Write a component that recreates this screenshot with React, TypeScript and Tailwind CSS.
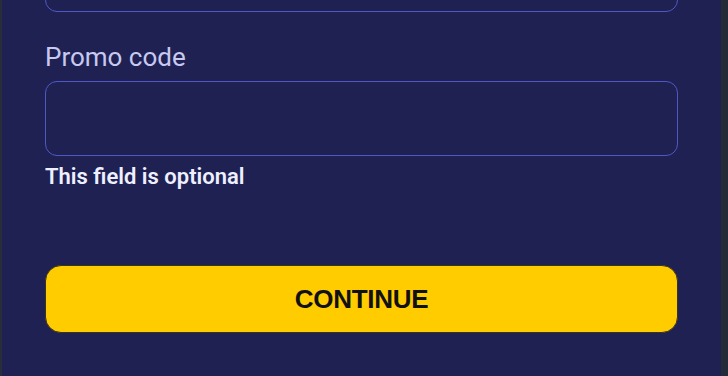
import React from 'react';

const App: React.FC = () => {
    return (
        <div className="w-[728px] h-[376px] overflow-hidden flex bg-[#232a38]">
            <div className="w-[2px] bg-[#2a2d3c]" />
            <div className="w-[719px] h-full bg-[#1f2153] pl-[43px] pr-[43px] font-['Roboto',sans-serif]">
                <input
                    type="text"
                    className="block w-full h-[74px] mt-[-62px] rounded-[12px] border border-[#4f57c8] bg-transparent outline-none"
                />
                <label htmlFor="promo" className="block mt-[28px] text-[26px] leading-[34px] text-[#c7c9f0]">
                    Promo code
                </label>
                <input
                    id="promo"
                    type="text"
                    className="block w-full h-[75px] mt-[7px] rounded-[12px] border border-[#4f57c8] bg-transparent outline-none"
                />
                <p className="mt-[7px] text-[22px] leading-[28px] font-semibold text-[#eef0ff]">This field is optional</p>
                <button
                    type="submit"
                    className="block w-full h-[68px] mt-[74px] rounded-[16px] border border-[#3a3320] bg-[#ffcc00] text-[26px] font-bold text-[#111] font-['Liberation_Sans',sans-serif] tracking-[-0.3px]"
                >
                    CONTINUE
                </button>
            </div>
        </div>
    );
};

export default App;
